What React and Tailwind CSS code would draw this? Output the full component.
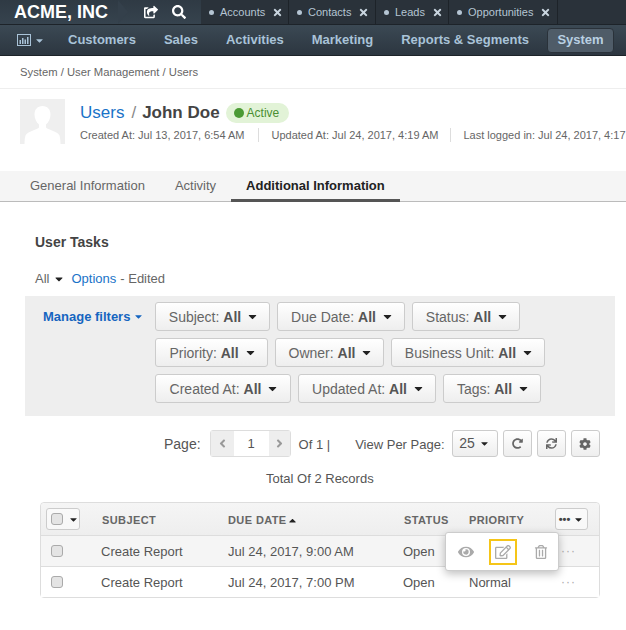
import { FaShareSquare, FaSearch, FaTimes, FaCaretDown, FaCaretUp, FaAngleLeft, FaAngleRight, FaRedoAlt, FaSync, FaCog, FaEye, FaRegEdit, FaRegTrashAlt } from 'react-icons/fa'

const tabs = [
  { name: 'Accounts', w: 'w-[88px]' },
  { name: 'Contacts', w: 'w-[87px]' },
  { name: 'Leads', w: 'w-[73px]' },
  { name: 'Opportunities', w: 'w-[109px]' },
]

const navItems = ['Customers', 'Sales', 'Activities', 'Marketing', 'Reports & Segments']

const filterRows = [
  [['Subject', 'w-[115px]'], ['Due Date', 'w-[128px]'], ['Status', 'w-[108px]']],
  [['Priority', 'w-[113px]'], ['Owner', 'w-[109px]'], ['Business Unit', 'w-[154px]']],
  [['Created At', 'w-[136px]'], ['Updated At', 'w-[138px]'], ['Tags', 'w-[98px]']],
]

function Checkbox() {
  return <span className="block w-3 h-3 rounded-[3px] border border-[#aaa] bg-[#e4e4e4]" />
}

function ToolButton({ children }) {
  return (
    <button className="flex items-center justify-center w-[29px] h-[27px] rounded-[3px] border border-[#ccc] bg-gradient-to-b from-white to-[#eee] text-[#666] text-[13px]">
      {children}
    </button>
  )
}

function TaskRow({ date, priority, shaded }) {
  return (
    <div className={`flex items-center h-[31px] border-t border-[#ddd] text-[13px] text-[#555] ${shaded ? 'bg-[#f5f5f5]' : 'bg-white'}`}>
      <span className="w-[60px] pl-[10px]"><Checkbox /></span>
      <span className="w-[127px] pt-[2px]">Create Report</span>
      <span className="w-[175px] pt-[2px]">Jul 24, 2017, {date}</span>
      <span className="w-[66px] pt-[2px]">Open</span>
      <span className="w-[92px] pt-[2px]">{priority}</span>
      <span className="text-[#aaa] tracking-[1px] text-[12px]">···</span>
    </div>
  )
}

export default function App() {
  return (
    <div className="w-[626px] h-[630px] overflow-hidden bg-white font-['Liberation_Sans',Arial,sans-serif] text-[#555]">
      {/* top bar */}
      <div className="flex h-[25px] bg-[#2a323a] border-b border-[#1d2329]">
        <div className="relative flex items-center w-[118px] pl-[14px] bg-gradient-to-b from-[#2f3a44] to-[#36434e] text-white font-bold text-[18px] whitespace-nowrap">
          ACME, INC
          <span className="absolute left-[118px] top-0 w-0 h-0 border-y-[12px] border-y-transparent border-l-[10px] border-l-[#34404b]" />
        </div>
        <div className="flex items-center w-[83px] pl-[26px] gap-[14px] bg-gradient-to-b from-[#2f3a44] to-[#36434e] text-white text-[14px]">
          <FaShareSquare />
          <FaSearch />
        </div>
        {tabs.map((t) => (
          <div key={t.name} className={`flex items-center ${t.w} pl-[8px] border-r border-[#1d2329] text-[#b5c5d3] text-[11px] shrink-0`}>
            <span className="w-[5px] h-[5px] rounded-full bg-[#b5c5d3] mr-[6px] shrink-0" />
            <span>{t.name}</span>
            <FaTimes className="ml-[7px] text-[#c9d5df] text-[11px] shrink-0" />
          </div>
        ))}
      </div>

      {/* main nav */}
      <div className="flex items-center h-[31px] bg-gradient-to-b from-[#3b4954] to-[#2c3640] border-b border-[#1d2329]">
        <div className="flex items-center w-[68px] pl-[17px] text-[#a9c3d8]">
          <svg viewBox="0 0 14 12" className="w-[14px] h-[12px]" fill="currentColor">
            <path d="M0 0h14v12H0zM1 1v10h12V1z" fillRule="evenodd" />
            <path d="M2.500 6h1.500v4H2.500zM5 4h1.500v6H5zM7.500 5.500H9V10H7.500zM10 3h1.500v7H10z" />
          </svg>
          <FaCaretDown className="ml-[3px] text-[11px]" />
        </div>
        <nav className="flex items-center gap-[28px] text-[13px] font-bold text-[#a9c3d8] whitespace-nowrap">
          {navItems.map((n) => <span key={n}>{n}</span>)}
        </nav>
        <span className="ml-[18px] flex items-center justify-center w-[67px] h-[25px] rounded-[4px] border border-[#2a323a] bg-[#4f5c68] text-[#b9d0e2] text-[13px] font-bold">System</span>
      </div>

      {/* breadcrumb */}
      <div className="flex items-center h-[33px] pl-[20px] border-b border-[#eee] text-[11.25px] text-[#666]">
        System / User Management / Users
      </div>

      {/* page header */}
      <div className="flex h-[82px] pl-[20px] pt-[10px] whitespace-nowrap">
        <div className="w-[45px] h-[45px] bg-[#efefef] overflow-hidden relative shrink-0">
          <svg viewBox="0 0 45 45" className="w-full h-full">
            <path d="M22.500 7c-5 0-8 3.500-8 8.500 0 4 2 8 4.500 10v3c-1 2-12 4-13.500 8-.5 1.500-1 5-1 8.500h36c0-3.500-.5-7-1-8.500-1.500-4-12.500-6-13.500-8v-3c2.500-2 4.500-6 4.500-10 0-5-3-8.500-8-8.500z" fill="#fff" />
          </svg>
        </div>
        <div className="pl-[15px]">
          <div className="flex items-center h-[28px]">
            <span className="text-[17px] text-[#1a73c8]">Users</span>
            <span className="text-[17px] text-[#888] ml-[7px] mr-[6px]">/</span>
            <span className="text-[17px] font-bold text-[#444]">John Doe</span>
            <span className="ml-[6px] flex items-center h-[20px] pl-[8px] pr-[10px] rounded-full bg-[#e2f3d7] text-[#4a8f32] text-[12px]">
              <span className="w-[10px] h-[10px] rounded-full bg-[#4a9a34] mr-[3px]" />
              Active
            </span>
          </div>
          <div className="flex items-center h-[16px] text-[11px] text-[#666]">
            <span>Created At: Jul 13, 2017, 6:54 AM</span>
            <span className="w-px h-[14px] bg-[#ddd] mx-[13px]" />
            <span>Updated At: Jul 24, 2017, 4:19 AM</span>
            <span className="w-px h-[14px] bg-[#ddd] mx-[12px]" />
            <span>Last logged in: Jul 24, 2017, 4:17 AM</span>
          </div>
        </div>
      </div>

      {/* tabs */}
      <div className="flex h-[31px] pl-[15px] bg-[#f5f5f5] border-b border-[#bbb] text-[13px] text-[#666]">
        <span className="flex items-center px-[15px]">General Information</span>
        <span className="flex items-center px-[15px]">Activity</span>
        <span className="flex items-center px-[15px] border-b-[3px] border-[#555] h-[31px] pt-[1px] font-bold text-[#222]">Additional Information</span>
      </div>

      {/* content */}
      <div className="pl-[25px] pr-[11px]">
        <h2 className="pl-[10px] pt-[31px] text-[14px] font-bold leading-[18px] text-[#444]">User Tasks</h2>
        <div className="flex items-center pl-[10px] mt-[18px] h-[20px] text-[13px] text-[#666]">
          All <FaCaretDown className="ml-[4px] text-[#222] text-[12px]" />
          <span className="ml-[6px] text-[#1a73c8]">Options</span>
          <span className="ml-[4px]">- Edited</span>
        </div>

        {/* filters */}
        <div className="flex mt-[7px] h-[120px] bg-[#eee] pt-[6px]">
          <div className="flex items-start w-[130px] pl-[18px] pt-[5px] text-[13px] font-bold text-[#1565c0]">
            Manage filters <FaCaretDown className="ml-[3px] mt-[4px] text-[11px]" />
          </div>
          <div className="flex flex-col gap-[7px]">
            {filterRows.map((row, i) => (
              <div key={i} className="flex gap-[7px]">
                {row.map(([label, w]) => (
                  <button key={label} className={`flex items-center justify-center gap-[5px] pl-[3px] ${w} h-[29px] rounded-[3px] border border-[#ccc] bg-gradient-to-b from-white to-[#eee] text-[14px] text-[#666]`}>
                    <span className="pt-[2px]">{label}: <b className="text-[#555]">All</b></span>
                    <FaCaretDown className="text-[#222] text-[13px]" />
                  </button>
                ))}
              </div>
            ))}
          </div>
        </div>

        {/* pager */}
        <div className="flex items-center h-[27px] mt-[14px] pl-[139px] text-[13px] text-[#555]">
          <span className="text-[14px] pt-[2px]">Page:</span>
          <div className="flex items-center h-[27px] ml-[9px] border border-[#ddd] rounded-[3px] bg-white">
            <span className="flex items-center justify-center w-[23px] h-full bg-[#eee] text-[#999]"><FaAngleLeft /></span>
            <span className="flex items-center justify-center w-[35px] h-full">1</span>
            <span className="flex items-center justify-center w-[21px] h-full bg-[#eee] text-[#999]"><FaAngleRight /></span>
          </div>
          <span className="ml-[8px] pt-[2px]">Of 1 |</span>
          <span className="ml-[25px] pt-[2px]">View Per Page:</span>
          <button className="flex items-center justify-center gap-[4px] ml-[7px] w-[46px] h-[27px] rounded-[3px] border border-[#ccc] bg-gradient-to-b from-white to-[#eee] text-[#555] text-[14px]">
            25 <FaCaretDown className="text-[#222] text-[11px]" />
          </button>
          <div className="flex gap-[5px] ml-[5px]">
            <ToolButton><FaRedoAlt className="text-[11px]" /></ToolButton>
            <ToolButton><FaSync className="text-[11px]" /></ToolButton>
            <ToolButton><FaCog className="text-[12px]" /></ToolButton>
          </div>
        </div>

        <div className="mt-[13px] h-[18px] pl-[241px] text-[13px] leading-[18px] text-[#555]">Total Of 2 Records</div>

        {/* table */}
        <div className="relative ml-[15px] mt-[14px] w-[560px] border border-[#ddd] rounded-[4px]">
          <div className="flex items-center h-[32px] bg-gradient-to-b from-[#f5f5f5] to-[#eee] rounded-t-[4px] text-[11px] font-bold tracking-[0.4px] text-[#666]">
            <span className="w-[61px] pl-[5px]">
              <span className="flex items-center gap-[5px] w-[34px] h-[22px] pl-[4px] rounded-[3px] border border-[#ccc] bg-white/50">
                <Checkbox />
                <FaCaretDown className="text-[#222] text-[11px]" />
              </span>
            </span>
            <span className="w-[126px] pt-[2px]">SUBJECT</span>
            <span className="flex items-center w-[176px] pt-[2px]">DUE DATE<FaCaretUp className="text-[#222] text-[11px]" /></span>
            <span className="w-[65px] pt-[2px]">STATUS</span>
            <span className="w-[86px] pt-[2px]">PRIORITY</span>
            <span className="flex items-center justify-center gap-[3px] w-[33px] h-[22px] rounded-[3px] border border-[#ccc] bg-white/50 text-[#444] tracking-[0px]">
              <span className="leading-[8px]">•••</span>
              <FaCaretDown className="text-[#222] text-[11px] shrink-0" />
            </span>
          </div>
          <TaskRow date="9:00 AM" priority="" shaded />
          <TaskRow date="7:00 PM" priority="Normal" />

          {/* row action popover */}
          <div className="absolute left-[404px] top-[29px] flex items-center w-[114px] h-[39px] rounded-[3px] border border-[#ccc] bg-white shadow-[0_3px_8px_rgba(0,0,0,0.25)]">
            <FaEye className="ml-[12px] text-[16px] text-[#aaa]" />
            <span className="flex items-center justify-center ml-[15px] w-[28px] h-[26px] border-[2px] border-[#f5c518]">
              <FaRegEdit className="text-[16px] text-[#aaa]" />
            </span>
            <FaRegTrashAlt className="ml-[17px] text-[14px] text-[#aaa]" />
          </div>
        </div>
      </div>
    </div>
  )
}
